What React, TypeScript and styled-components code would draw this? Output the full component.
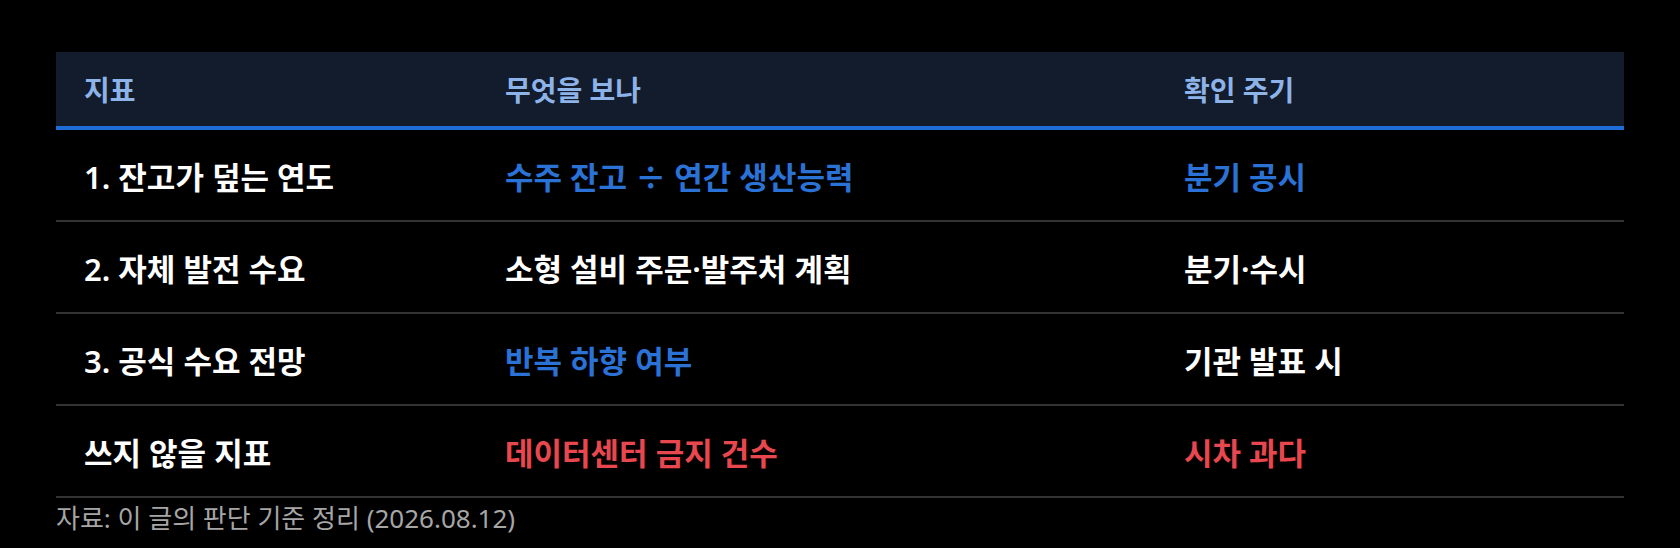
import React from 'react';
import styled, { createGlobalStyle } from 'styled-components';

const GlobalStyle = createGlobalStyle`
  html, body {
    margin: 0;
    padding: 0;
    background: #000;
  }
  body {
    font-family: "Noto Sans", "Noto Sans CJK KR", sans-serif;
    color: #fff;
  }
`;

type Tone = 'plain' | 'blue' | 'red';

const toneColor: Record<Tone, string> = {
  plain: '#ffffff',
  blue: '#2b72d6',
  red: '#e8474f',
};

const Page = styled.div`
  padding: 52px 56px 0;
`;

const Table = styled.table`
  width: 100%;
  border-collapse: collapse;
  table-layout: fixed;
`;

const HeadRow = styled.tr`
  background: #121c2c;
  border-bottom: 4px solid #1f6dd6;
`;

const HeadCell = styled.th`
  height: 74px;
  padding: 0 28px;
  text-align: left;
  font-size: 28px;
  font-weight: 700;
  color: #8db3e8;
  vertical-align: middle;
`;

const Row = styled.tr`
  border-bottom: 2px solid #333333;
`;

const Cell = styled.td<{ $tone: Tone }>`
  height: 90px;
  padding: 0 28px;
  font-size: 31px;
  font-weight: ${p => (p.$tone === 'plain' ? 600 : 700)};
  color: ${p => toneColor[p.$tone]};
  vertical-align: middle;
  white-space: nowrap;
`;

// the division sign sits wider in the reference, so take it from the CJK face
const Divide = styled.span`
  font-family: "Noto Sans CJK KR", sans-serif;
`;

const Source = styled.p`
  margin: 2px 0 0;
  font-size: 26px;
  line-height: 36px;
  color: #a6a6a6;
`;

const rows: { label: string; what: [React.ReactNode, Tone]; when: [string, Tone] }[] = [
  {
    label: '1. 잔고가 덮는 연도',
    what: [<>수주 잔고 <Divide>÷</Divide> 연간 생산능력</>, 'blue'],
    when: ['분기 공시', 'blue'],
  },
  { label: '2. 자체 발전 수요', what: ['소형 설비 주문·발주처 계획', 'plain'], when: ['분기·수시', 'plain'] },
  { label: '3. 공식 수요 전망', what: ['반복 하향 여부', 'blue'], when: ['기관 발표 시', 'plain'] },
  { label: '쓰지 않을 지표', what: ['데이터센터 금지 건수', 'red'], when: ['시차 과다', 'red'] },
];

export default function App() {
  return (
    <>
      <GlobalStyle />
      <Page>
        <Table>
          <colgroup>
            <col style={{ width: 421 }} />
            <col style={{ width: 679 }} />
            <col />
          </colgroup>
          <thead>
            <HeadRow>
              <HeadCell>지표</HeadCell>
              <HeadCell>무엇을 보나</HeadCell>
              <HeadCell>확인 주기</HeadCell>
            </HeadRow>
          </thead>
          <tbody>
            {rows.map(r => (
              <Row key={r.label}>
                <Cell $tone="plain">{r.label}</Cell>
                <Cell $tone={r.what[1]}>{r.what[0]}</Cell>
                <Cell $tone={r.when[1]}>{r.when[0]}</Cell>
              </Row>
            ))}
          </tbody>
        </Table>
        <Source>자료: 이 글의 판단 기준 정리 (2026.08.12)</Source>
      </Page>
    </>
  );
}
